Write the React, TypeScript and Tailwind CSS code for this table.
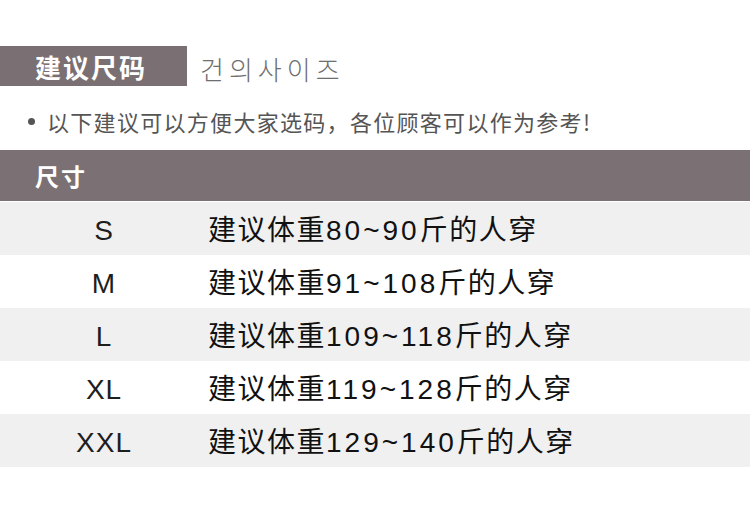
const sizes = [
  { size: "S", range: "80~90", bg: "bg-[#f0f0f0]" },
  { size: "M", range: "91~108", bg: "bg-white" },
  { size: "L", range: "109~118", bg: "bg-[#f0f0f0]" },
  { size: "XL", range: "119~128", bg: "bg-white" },
  { size: "XXL", range: "129~140", bg: "bg-[#f0f0f0]" },
];

export default function App() {
  return (
    <div className="w-[750px] h-[513px] bg-white overflow-hidden pt-[46px] font-['Liberation_Sans','Noto_Sans_CJK_SC',sans-serif]">
      {/* title */}
      <div className="h-[40px] flex items-center">
        <div className="w-[187px] h-[40px] bg-[#7a6f72] flex items-center pl-[35px] text-white text-[26px] font-bold tracking-[2px] font-['Noto_Sans_CJK_SC',sans-serif]">
          建议尺码
        </div>
        <span className="ml-[13px] mt-[6px] leading-none text-[26px] font-light tracking-[5px] text-[#6e6e6e] font-['Noto_Sans_CJK_KR',sans-serif]">
          건의사이즈
        </span>
      </div>

      {/* note */}
      <div className="mt-[20px] h-[30px] flex items-center pl-[28px] text-[#555] text-[22px] leading-none tracking-[1.3px] font-['Noto_Sans_CJK_SC',sans-serif]">
        <span className="w-[7px] h-[7px] rounded-full bg-[#555] mr-[12px]" />
        以下建议可以方便大家选码，各位顾客可以作为参考!
      </div>

      {/* table */}
      <div className="mt-[14px]">
        <div className="h-[51px] bg-[#7b7073] flex items-center pl-[35px] text-white text-[24px] font-bold tracking-[2px] font-['Noto_Sans_CJK_SC',sans-serif]">
          尺寸
        </div>
        <div className="h-[1px] bg-white" />
        {sizes.map((row) => (
          <div key={row.size} className={`h-[53px] flex items-center pt-[5px] ${row.bg}`}>
            <div className="w-[208px] text-center text-[28px] tracking-[1px] text-[#1e1e1e]">
              {row.size}
            </div>
            <div className="text-[28px] tracking-[1.5px] text-[#111]">
              建议体重<span className="tracking-[3px]">{row.range}</span>斤的人穿
            </div>
          </div>
        ))}
      </div>
    </div>
  );
}
